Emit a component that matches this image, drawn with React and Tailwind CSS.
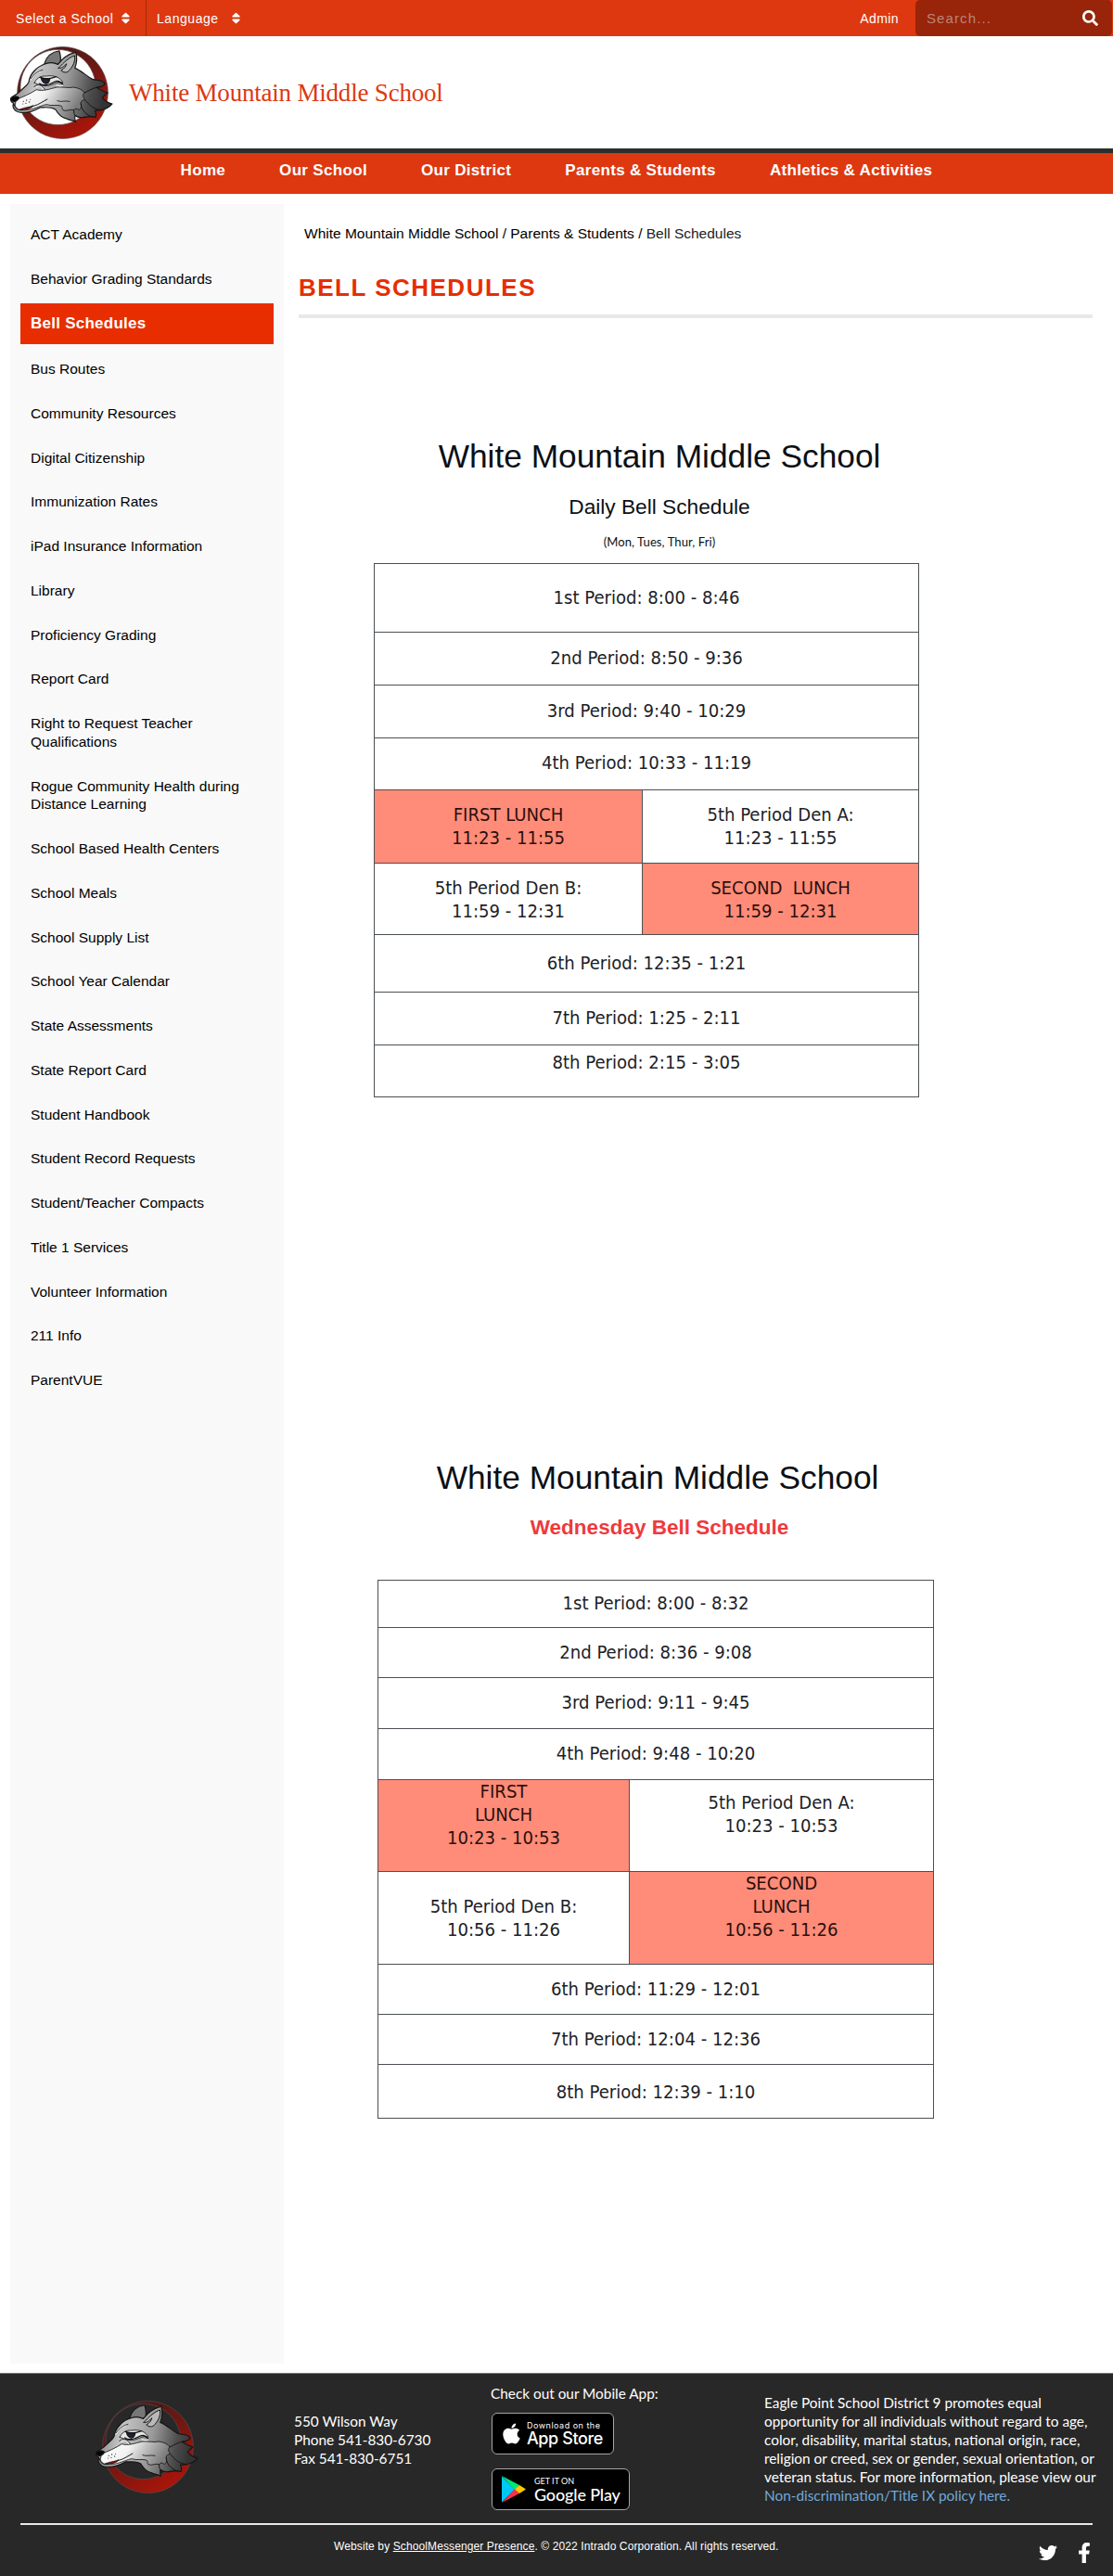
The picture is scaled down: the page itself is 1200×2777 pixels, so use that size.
import { FaSearch, FaSort, FaTwitter, FaFacebookF, FaApple } from 'react-icons/fa'

const NAV_LINKS = ['Home', 'Our School', 'Our District', 'Parents & Students', 'Athletics & Activities']

const SIDE_LINKS = [
  'ACT Academy',
  'Behavior Grading Standards',
  'Bell Schedules',
  'Bus Routes',
  'Community Resources',
  'Digital Citizenship',
  'Immunization Rates',
  'iPad Insurance Information',
  'Library',
  'Proficiency Grading',
  'Report Card',
  'Right to Request Teacher Qualifications',
  'Rogue Community Health during Distance Learning',
  'School Based Health Centers',
  'School Meals',
  'School Supply List',
  'School Year Calendar',
  'State Assessments',
  'State Report Card',
  'Student Handbook',
  'Student Record Requests',
  'Student/Teacher Compacts',
  'Title 1 Services',
  'Volunteer Information',
  '211 Info',
  'ParentVUE',
]

// h / pt are full class names, each row of the scanned sheets has its own height
const DAILY_ROWS = [
  { h: 'h-[74px]', cells: [{ pt: 'pt-[24px]', lines: ['1st Period: 8:00 - 8:46'] }] },
  { h: 'h-[57px]', cells: [{ pt: 'pt-[15px]', lines: ['2nd Period: 8:50 - 9:36'] }] },
  { h: 'h-[57px]', cells: [{ pt: 'pt-[15px]', lines: ['3rd Period: 9:40 - 10:29'] }] },
  { h: 'h-[56px]', cells: [{ pt: 'pt-[14px]', lines: ['4th Period: 10:33 - 11:19'] }] },
  {
    h: 'h-[79px]',
    cells: [
      { pt: 'pt-[14px]', lunch: true, lines: ['FIRST LUNCH', '11:23 - 11:55'] },
      { pt: 'pt-[14px]', lines: ['5th Period Den A:', '11:23 - 11:55'] },
    ],
  },
  {
    h: 'h-[77px]',
    cells: [
      { pt: 'pt-[14px]', lines: ['5th Period Den B:', '11:59 - 12:31'] },
      { pt: 'pt-[14px]', lunch: true, lines: ['SECOND\u00a0 LUNCH', '11:59 - 12:31'] },
    ],
  },
  { h: 'h-[62px]', cells: [{ pt: 'pt-[18px]', lines: ['6th Period: 12:35 - 1:21'] }] },
  { h: 'h-[57px]', cells: [{ pt: 'pt-[15px]', lines: ['7th Period: 1:25 - 2:11'] }] },
  { h: 'h-[56px]', cells: [{ pt: 'pt-[6px]', lines: ['8th Period: 2:15 - 3:05'] }] },
]

const WEDNESDAY_ROWS = [
  { h: 'h-[51px]', cells: [{ pt: 'pt-[12px]', lines: ['1st Period: 8:00 - 8:32'] }] },
  { h: 'h-[54px]', cells: [{ pt: 'pt-[14px]', lines: ['2nd Period: 8:36 - 9:08'] }] },
  { h: 'h-[55px]', cells: [{ pt: 'pt-[14px]', lines: ['3rd Period: 9:11 - 9:45'] }] },
  { h: 'h-[55px]', cells: [{ pt: 'pt-[14px]', lines: ['4th Period: 9:48 - 10:20'] }] },
  {
    h: 'h-[99px]',
    cells: [
      { pt: 'pt-0', lunch: true, lines: ['FIRST', 'LUNCH', '10:23 - 10:53'] },
      { pt: 'pt-[12px]', lines: ['5th Period Den A:', '10:23 - 10:53'] },
    ],
  },
  {
    h: 'h-[100px]',
    cells: [
      { pt: 'pt-[25px]', lines: ['5th Period Den B:', '10:56 - 11:26'] },
      { pt: 'pt-0', lunch: true, lines: ['SECOND', 'LUNCH', '10:56 - 11:26'] },
    ],
  },
  { h: 'h-[54px]', cells: [{ pt: 'pt-[14px]', lines: ['6th Period: 11:29 - 12:01'] }] },
  { h: 'h-[54px]', cells: [{ pt: 'pt-[14px]', lines: ['7th Period: 12:04 - 12:36'] }] },
  { h: 'h-[58px]', cells: [{ pt: 'pt-[17px]', lines: ['8th Period: 12:39 - 1:10'] }] },
]

function WolfLogo({ id, className }) {
  return (
    <svg viewBox="30 25 340 306" className={className}>
      <defs>
        <linearGradient id={`${id}-ring`} x1="0" y1="0" x2="0.6" y2="1">
          <stop offset="0" stopColor="#3a1a1a" />
          <stop offset="0.5" stopColor="#6a1813" />
          <stop offset="1" stopColor="#a8150a" />
        </linearGradient>
        <linearGradient id={`${id}-fur`} x1="0" y1="0" x2="1" y2="0.15">
          <stop offset="0" stopColor="#6a6a6a" />
          <stop offset="0.3" stopColor="#c4c4c4" />
          <stop offset="0.6" stopColor="#9a9a9a" />
          <stop offset="0.85" stopColor="#4d4d4d" />
          <stop offset="1" stopColor="#333" />
        </linearGradient>
        <linearGradient id={`${id}-jaw`} x1="0" y1="0" x2="1" y2="0.2">
          <stop offset="0" stopColor="#fff" />
          <stop offset="0.45" stopColor="#f2f2f2" />
          <stop offset="0.75" stopColor="#b0b0b0" />
          <stop offset="1" stopColor="#7c7c7c" />
        </linearGradient>
      </defs>
      <path
        fillRule="evenodd"
        fill={`url(#${id}-ring)`}
        stroke="#5a4a4a"
        strokeWidth="2"
        d="M203 29a147 149 0 1 0 .1 0ZM188 38a122 122 0 1 1-.1 0Z"
      />
      <g stroke="#151515" strokeWidth="3.5" strokeLinejoin="round" strokeLinecap="round">
        <path fill="#777" d="M144 84C150 62 166 46 192 42C197 56 198 70 195 86Z" />
        <path
          fill={`url(#${id}-fur)`}
          d="M36 196C42 186 54 184 61 177C72 164 86 158 93 144C97 116 120 92 148 84C162 79 176 80 188 86C204 64 224 52 246 46C251 64 248 84 243 98C264 106 280 124 300 134C316 138 332 136 340 147C338 158 326 160 314 160C322 169 334 173 349 178C341 184 336 188 332 194C342 206 354 212 364 214C354 226 342 232 328 234C319 235 312 236 308 236C312 244 313 252 310 258C296 252 284 256 270 258C256 260 249 256 243 252C242 260 243 266 245 272C236 266 225 268 213 261C199 258 188 246 180 232C162 222 146 226 130 226C108 238 88 244 66 242C48 240 38 226 44 212C36 208 33 202 36 196Z"
        />
        <path
          fill={`url(#${id}-jaw)`}
          strokeWidth="2.5"
          d="M52 200C74 192 100 180 118 168C140 174 160 166 184 160C204 158 222 164 238 160C254 162 268 168 274 178C268 184 268 190 276 200C268 202 262 204 262 212C266 222 262 230 256 234C250 228 244 228 240 234C226 230 214 240 204 234C198 228 206 222 196 220C184 216 168 222 150 216C124 222 98 238 68 234C54 232 46 222 50 212Z"
        />
        <path fill="#b9b9b9" strokeWidth="3" d="M190 98C208 78 226 62 242 58C244 76 238 90 226 104C218 116 204 112 198 106C208 100 214 92 216 84C206 92 202 100 190 98Z" />
        <path fill="#050505" d="M35 196C42 188 56 188 62 194C58 202 50 208 42 206C36 204 34 200 35 196Z" />
        <path fill="none" strokeWidth="3" d="M46 216C48 230 58 236 72 234C84 224 98 226 112 220C126 216 140 206 153 199" />
        <path fill="#8d1410" strokeWidth="2" d="M66 231C82 224 96 226 108 219C104 228 84 236 66 231Z" />
        <path fill="#e6e6e6" strokeWidth="2.5" d="M112 146C116 132 132 122 150 124C176 120 196 128 204 146C186 140 176 150 160 154C142 158 126 152 112 146Z" />
        <path fill="#1d2432" d="M134 130C144 130 154 134 162 132C160 144 154 150 146 148C138 144 134 138 134 130Z" />
        <path fill="none" strokeWidth="4" d="M130 128C144 136 160 134 182 126M128 148C144 160 164 150 178 142C188 138 198 144 204 152" />
        <path fill="none" stroke="#efefef" strokeWidth="4" d="M100 136C106 122 116 112 132 108M118 160C126 152 136 156 140 166M184 154C194 156 200 158 204 154" />
        <path fill="none" strokeWidth="2.5" d="M100 132C110 116 124 108 138 104M110 158C122 148 136 152 146 168M186 204C200 210 208 202 226 206" />
        <path fill="none" strokeWidth="3" d="M274 178C294 168 306 160 322 160M276 202C288 214 300 232 328 234M262 214C264 232 274 246 298 256M240 234C238 246 242 252 252 256" />
      </g>
      <g fill="#333">
        <circle cx="76" cy="206" r="2" />
        <circle cx="86" cy="202" r="2" />
        <circle cx="84" cy="212" r="2" />
        <circle cx="95" cy="208" r="2" />
        <circle cx="74" cy="214" r="1.6" />
        <circle cx="98" cy="200" r="1.6" />
      </g>
    </svg>
  )
}

function TopBar() {
  return (
    <div className="flex h-[39px] items-center bg-[#dd3810] text-sm tracking-[0.55px] text-white">
      <div className="flex h-full w-[158px] items-center border-r border-[#a32b0d] pl-[17px]">
        <span className="w-[111px]">Select a School</span>
        <FaSort size={15} />
      </div>
      <div className="flex items-center pl-[11px]">
        <span className="w-[78px]">Language</span>
        <FaSort size={15} />
      </div>
      <span className="mr-[18px] ml-auto tracking-[0.4px]">Admin</span>
      <div className="mr-px flex h-full w-[212px] items-center justify-between rounded-[5px] bg-[#982409] pr-[15px] pl-3">
        <span className="text-[15px] tracking-[1.1px] text-[#b9867a]">Search...</span>
        <FaSearch size={17} />
      </div>
    </div>
  )
}

function SideNav() {
  return (
    <aside className="h-[2328px] w-[295px] shrink-0 bg-[#f9f9f9] px-[11px] pt-[11px]">
      {SIDE_LINKS.map((label) =>
        label === 'Bell Schedules' ? (
          <div
            key={label}
            className="mb-[5px] bg-[#e82e00] px-[11px] py-[12px] text-[17px] leading-[20.6px] font-bold tracking-[0.25px] text-white"
          >
            {label}
          </div>
        ) : (
          <div key={label} className="mb-[4px] py-[12px] pr-6 pl-[11px] text-[15.5px] leading-[19.75px] text-black">
            {label}
          </div>
        )
      )}
    </aside>
  )
}

function BellTable({ rows, split, className }) {
  return (
    <div className={`border-t border-l border-[#4b5054] ${className}`}>
      {rows.map((row, i) => (
        <div key={i} className={`flex ${row.h}`}>
          {row.cells.map((cell, j) => (
            <div
              key={j}
              className={`border-r border-b border-[#4b5054] text-center whitespace-nowrap ${cell.pt} ${
                cell.lunch ? 'bg-[#ff8c78] text-[#2b0f0d]' : 'text-[#1c2126]'
              } ${row.cells.length > 1 && j === 0 ? split : 'flex-1'}`}
            >
              {cell.lines.map((line) => (
                <div key={line}>{line}</div>
              ))}
            </div>
          ))}
        </div>
      ))}
    </div>
  )
}

function Footer() {
  return (
    <footer className="h-[219px] border-t border-[#777] bg-[#282828] font-['Lato',sans-serif] text-[15.35px] leading-5 text-white">
      <div className="flex h-[161px]">
        <div className="w-[317px] pt-[28px] pl-[102px]">
          <WolfLogo id="foot" className="h-[102px] w-[113px]" />
        </div>
        <div className="w-[212px] pt-[41px]">
          <p>550 Wilson Way</p>
          <p>Phone 541-830-6730</p>
          <p>Fax 541-830-6751</p>
        </div>
        <div className="w-[295px] pt-[11px]">
          <p>Check out our Mobile App:</p>
          <div className="mt-[11px] ml-px flex h-[45px] w-[132px] items-center gap-[4px] rounded-[6px] border border-[#a6a6a6] bg-black pl-[8px]">
            <FaApple size={25} />
            <div className="font-['Inter',sans-serif]">
              <div className="text-[9px] leading-[11px] tracking-[0.5px]">Download on the</div>
              <div className="text-[18px] leading-[18px] font-medium tracking-[-0.4px]">App Store</div>
            </div>
          </div>
          <div className="mt-[15px] ml-px flex h-[45px] w-[149px] items-center gap-[9px] rounded-[6px] border border-[#a6a6a6] bg-black pl-[10px]">
            <svg viewBox="0 0 26 29" className="h-[29px] w-[26px]">
              <path fill="#00c8f5" d="M0 0.5L14 14.5L0 28.5Z" />
              <path fill="#00e676" d="M0 0L19 10L14 15Z" />
              <path fill="#f43249" d="M0 29L19 19L14 14Z" />
              <path fill="#ffc900" d="M19 10L26 14.5L19 19L14 14.5Z" />
            </svg>
            <div>
              <div className="text-[9px] leading-[11px]">GET IT ON</div>
              <div className="text-[18px] leading-[19px] font-medium tracking-[-0.15px]">Google Play</div>
            </div>
          </div>
        </div>
        <div className="pt-[21px] whitespace-nowrap">
          <p>Eagle Point School District 9 promotes equal</p>
          <p>opportunity for all individuals without regard to age,</p>
          <p>color, disability, marital status, national origin, race,</p>
          <p>religion or creed, sex or gender, sexual orientation, or</p>
          <p>veteran status. For more information, please view our</p>
          <p className="text-[#6fa8dc]">Non-discrimination/Title IX policy here.</p>
        </div>
      </div>
      <div className="mx-[22px] flex justify-between border-t-2 border-[#e8e8e8] font-['Liberation_Sans',Arial,sans-serif]">
        <p className="mt-[13px] ml-[338px] text-[12px] tracking-[0.11px]">
          Website by <span className="underline">SchoolMessenger Presence</span>. © 2022 Intrado Corporation. All rights
          reserved.
        </p>
        <div className="mt-[19px] -mr-[2px] flex items-center gap-[18px]">
          <FaTwitter size={20} />
          <FaFacebookF size={22} />
        </div>
      </div>
    </footer>
  )
}

export default function App() {
  return (
    <div className="w-[1200px] bg-white font-['Liberation_Sans',Arial,sans-serif] text-black">
      <TopBar />
      <header className="flex h-[121px] items-start pl-[10px]">
        <WolfLogo id="head" className="mt-[10px] h-[102px] w-[113px]" />
        <h1 className="mt-[43px] ml-[16px] font-['Liberation_Serif',serif] text-[27px] leading-[36px] tracking-[-0.2px] text-[#dd3810]">
          White Mountain Middle School
        </h1>
      </header>
      <nav className="flex h-[49px] justify-center gap-[58px] border-t-[5px] border-[#2b2f2d] bg-[#dd3810] pt-[9px] text-[17px] leading-5 font-bold tracking-[0.32px] text-white">
        {NAV_LINKS.map((label) => (
          <span key={label}>{label}</span>
        ))}
      </nav>

      <div className="flex h-[2349px] pt-[11px] pl-[11px]">
        <SideNav />
        <main className="ml-[16px] w-[856px]">
          <div className="mt-[22px] ml-[6px] text-[15.5px] leading-5">
            White Mountain Middle School / Parents &amp; Students / <span className="text-[#222]">Bell Schedules</span>
          </div>
          <h2 className="mt-[31px] border-b-4 border-[#e8e8e8] pb-[12px] text-[26px] leading-[34px] font-bold tracking-[1.5px] text-[#e62e00]">
            BELL SCHEDULES
          </h2>

          <section className="h-[1101px] pt-[128px] pl-[81px] leading-[24.6px]">
            <div className="ml-[14px] w-[588px] text-center text-[#0c1014]">
              <div className="text-[35.3px] leading-[42px]">White Mountain Middle School</div>
              <div className="mt-[19px] text-[22.7px] leading-[28px]">Daily Bell Schedule</div>
              <div className="mt-[14px] font-['Lato',sans-serif] text-[13px] leading-5 tracking-[0.1px]">
                (Mon, Tues, Thur, Fri)
              </div>
            </div>
            <BellTable
              rows={DAILY_ROWS}
              split="w-[289px]"
              className="mt-[13px] w-[588px] font-['DejaVu_Sans_Condensed','DejaVu_Sans',sans-serif] text-[20.1px]"
            />
          </section>

          <section className="pt-[128px] pl-[85px] leading-[24.8px]">
            <div className="ml-[2px] w-[600px] text-center">
              <div className="text-[35.3px] leading-[42px] text-[#0c1014]">White Mountain Middle School</div>
              <div className="mt-[19px] ml-[4px] text-[22.5px] leading-[28px] font-bold text-[#ee3a3c]">
                Wednesday Bell Schedule
              </div>
            </div>
            <BellTable
              rows={WEDNESDAY_ROWS}
              split="w-[271px]"
              className="mt-[42px] w-[600px] font-['DejaVu_Sans_Condensed','DejaVu_Sans',sans-serif] text-[20.1px]"
            />
          </section>
        </main>
      </div>

      <Footer />
    </div>
  )
}
